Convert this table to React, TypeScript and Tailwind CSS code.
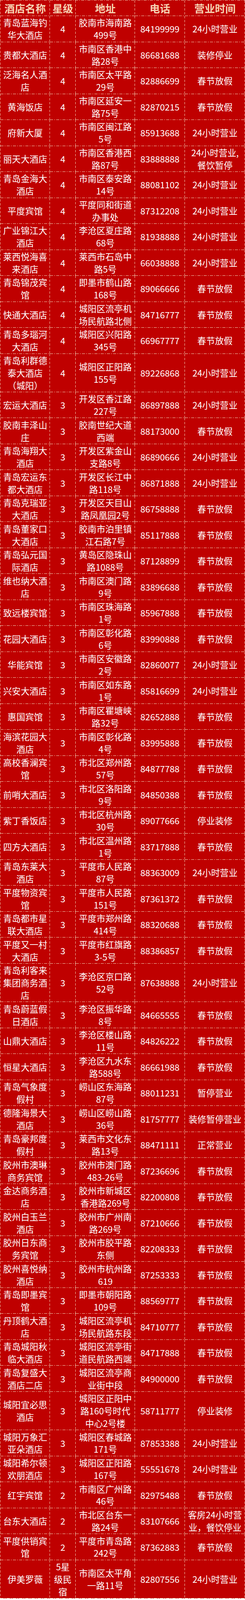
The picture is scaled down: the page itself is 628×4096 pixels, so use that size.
import React from "react";

const rows: string[][] = [
  ["青岛蓝海钓|华大酒店", "4", "胶南市海南路|499号", "84199999", "24小时营业"],
  ["贵都大酒店", "4", "市南区香港中|路28号", "86681688", "装修停业"],
  ["泛海名人酒|店", "4", "市南区太平路|29号", "82886699", "春节放假"],
  ["黄海饭店", "4", "市南区延安一|路75号", "82870215", "春节放假"],
  ["府新大厦", "4", "市南区闽江路|5号", "85913688", "24小时营业"],
  ["丽天大酒店", "4", "市南区香港西|路87号", "83888888", "24小时营业,|餐饮暂停"],
  ["青岛金海大|酒店", "4", "市南区泰安路|14号", "88081102", "24小时营业"],
  ["平度宾馆", "4", "平度同和街道|办事处", "87312208", "24小时营业"],
  ["广业锦江大|酒店", "4", "李沧区夏庄路|68号", "81938888", "24小时营业"],
  ["莱西悦海喜|来酒店", "4", "莱西市石岛中|路5号", "66038888", "24小时营业"],
  ["青岛锦茂宾|馆", "4", "即墨市鹤山路|168号", "89066666", "春节放假"],
  ["快通大酒店", "4", "城阳区流亭机|场民航路北侧", "84716777", "春节放假"],
  ["青岛多瑙河|大酒店", "4", "城阳区兴阳路|345号", "66967777", "春节放假"],
  ["青岛利群德|泰大酒店|（城阳）", "4", "城阳区正阳路|155号", "89226868", "24小时营业"],
  ["宏运大酒店", "3", "开发区香江路|227号", "86897888", "24小时营业"],
  ["胶南丰泽山|庄", "3", "胶南世纪大道|西端", "88173000", "春节放假"],
  ["青岛海翔大|酒店", "3", "开发区紫金山|支路8号", "86890666", "24小时营业"],
  ["青岛宏运东|都大酒店", "3", "开发区长江中|路118号", "86871888", "24小时营业"],
  ["青岛克瑞亚|大酒店", "3", "开发区天目山|路凤凰园2号", "86758888", "春节放假"],
  ["青岛董家口|大酒店", "3", "胶南市泊里镇|江石路7号", "85117888", "春节放假"],
  ["青岛弘元国|际酒店", "3", "黄岛区隐珠山|路1088号", "87128899", "春节放假"],
  ["维也纳大酒|店", "3", "市南区澳门路|9号", "83896688", "春节放假"],
  ["致远楼宾馆", "3", "市南区珠海路|1号", "85967888", "春节放假"],
  ["花园大酒店", "3", "市南区彰化路|6号", "83990888", "春节放假"],
  ["华能宾馆", "3", "市南区安徽路|2号", "82860077", "24小时营业"],
  ["兴安大酒店", "3", "市南区如东路|1号", "85816699", "24小时营业"],
  ["惠国宾馆", "3", "市南区瞿塘峡|路32号", "82652888", "春节放假"],
  ["海滨花园大|酒店", "3", "市南区彰化路|4号", "83995888", "春节放假"],
  ["高校香澜宾|馆", "3", "市北区郑州路|57号", "84877788", "春节放假"],
  ["前哨大酒店", "3", "市北区洛阳路|9号", "84850388", "春节放假"],
  ["紫丁香饭店", "3", "市北区杭州路|30号", "89077666", "停业装修"],
  ["四方大酒店", "3", "市北区温州路|1号", "83717888", "春节放假"],
  ["青岛东莱大|酒店", "3", "平度市人民路|87号", "88363009", "24小时营业"],
  ["平度物资宾|馆", "3", "平度市人民路|151号", "87361372", "春节放假"],
  ["青岛都市星|联大酒店", "3", "平度市郑州路|414号", "88320688", "春节放假"],
  ["平度又一村|大酒店", "3", "平度市红旗路|3-5号", "88386857", "春节放假"],
  ["青岛利客来|集团商务酒|店", "3", "李沧区京口路|52号", "87638888", "24小时营业"],
  ["青岛蔚蓝假|日酒店", "3", "李沧区振华路|8号", "84665555", "春节放假"],
  ["山鼎大酒店", "3", "李沧区楼山路|11号", "84826222", "春节放假"],
  ["恒星大酒店", "3", "李沧区九水东|路588号", "86661988", "春节放假"],
  ["青岛气象度|假村", "3", "崂山区东海路|87号", "88011231", "暂停营业"],
  ["德隆海景大|酒店", "3", "崂山区崂山路|36号", "81757777", "装修暂停营业"],
  ["青岛豪邦度|假村", "3", "莱西市文化东|路13号", "88471111", "正常营业"],
  ["胶州市澳琳|商务宾馆", "3", "胶州市澳门路|483-26号", "87236696", "春节放假"],
  ["金达商务酒|店", "3", "胶州市新城区|香港路269号", "82200808", "春节放假"],
  ["胶州白玉兰|酒店", "3", "胶州市广州南|路269号", "87210666", "春节放假"],
  ["胶州日东商|务宾馆", "3", "胶州市胶平路|东侧", "82208333", "春节放假"],
  ["胶州喜悦纳|酒店", "3", "胶州市杭州路|619", "87253333", "春节放假"],
  ["青岛即墨宾|馆", "3", "即墨市朝阳路|109号", "88569777", "春节放假"],
  ["丹顶鹤大酒|店", "3", "城阳区流亭机|场民航路东段", "84710777", "春节放假"],
  ["青岛城阳秋|临大酒店", "3", "城阳区流亭街|道民航路西端", "84717888", "春节放假"],
  ["青岛复盛大|酒店二店", "3", "城阳区流亭商|业街中段", "84900000", "春节放假"],
  ["城阳宜必思|酒店", "3", "城阳区正阳中|路160号时代|中心2号楼", "58711777", "停业装修"],
  ["城阳万象汇|亚朵酒店", "3", "城阳区春城路|171号", "87853388", "24小时营业"],
  ["城阳希尔顿|欢朋酒店", "3", "城阳区正阳路|167号", "55551678", "24小时营业"],
  ["红宇宾馆", "2", "市南区广州路|46号", "82975488", "春节放假"],
  ["台东大酒店", "2", "市北区台东一|路24号", "83107666", "客房24小时营|业，餐饮停业"],
  ["平度供销宾|馆", "2", "平度市青岛路|242号", "87362883", "春节放假"],
  ["伊美罗薇", "5星|级民|宿", "市南区太平角|一路11号", "82807556", "24小时营业"],
];

const headers = ["酒店名称", "星级", "地址", "电话", "营业时间"];

const cellLines =
  "flex flex-col items-center justify-center text-center bg-no-repeat [background-image:repeating-linear-gradient(90deg,#f2d0b4_0_8px,transparent_8px_11px,#f2d0b4_11px_13px,transparent_13px_16px),repeating-linear-gradient(180deg,#f2d0b4_0_6px,transparent_6px_10px)] [background-size:100%_1px,1px_100%] [background-position:left_bottom,right_top]";

function Cell({ text }: { text: string }) {
  return (
    <div className={`${cellLines} py-[1.35px] text-[22.6px] leading-[31.9px] text-white`}>
      {text.split("|").map((l, i) => (
        <span key={i} className="whitespace-nowrap">
          {l}
        </span>
      ))}
    </div>
  );
}

export default function App() {
  return (
    <div className="w-[628px] bg-[#bf0000] pt-px pl-px font-['Noto_Sans_CJK_SC','Noto_Sans',sans-serif] bg-no-repeat [background-image:repeating-linear-gradient(90deg,#f2d0b4_0_8px,transparent_8px_11px,#f2d0b4_11px_13px,transparent_13px_16px),repeating-linear-gradient(180deg,#f2d0b4_0_6px,transparent_6px_10px)] [background-size:100%_1px,1px_100%] [background-position:left_top,left_top]">
      <div className="grid grid-cols-[127px_66px_152px_128px_154px]">
        {headers.map((h) => (
          <div
            key={h}
            className={`${cellLines} h-[40px] text-[26.5px] font-bold leading-[32px] text-[#f6d2b2]`}
          >
            <span className="whitespace-nowrap">{h}</span>
          </div>
        ))}
        {rows.map((r, ri) =>
          r.map((c, ci) => <Cell key={`${ri}-${ci}`} text={c} />)
        )}
      </div>
    </div>
  );
}
